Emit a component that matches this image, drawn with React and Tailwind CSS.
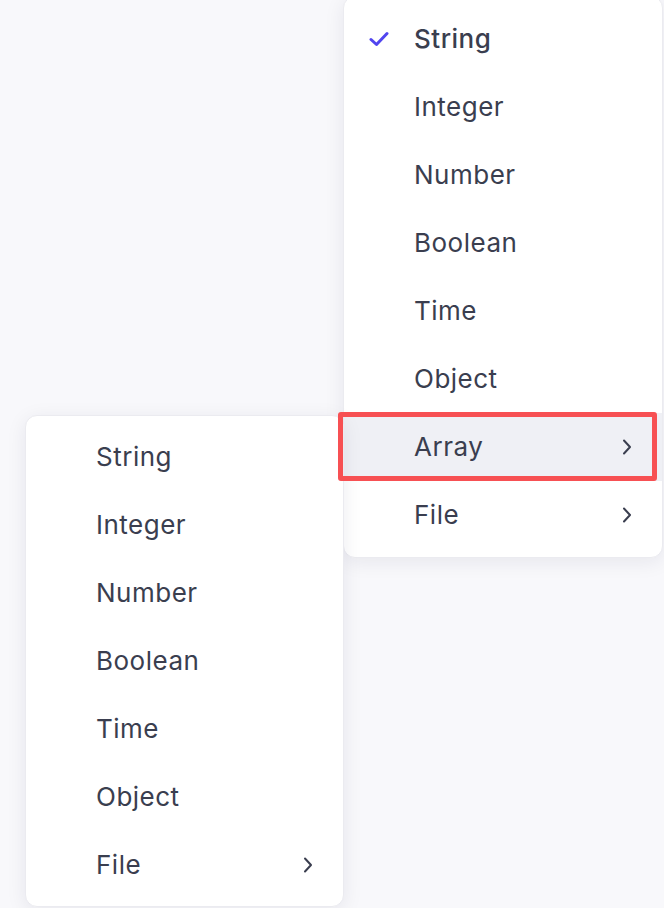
import React from "react";

const Chevron = () => (
  <svg width="10" height="16" viewBox="0 0 10 16" fill="none">
    <path d="M2 1.5 L8 8 L2 14.5" stroke="#3a3e4f" strokeWidth="2" strokeLinecap="round" strokeLinejoin="round" />
  </svg>
);

const Check = () => (
  <svg width="20" height="16" viewBox="0 0 20 16" fill="none">
    <path d="M2 8.5 L7.5 13.5 L18 2.5" stroke="#5145ef" strokeWidth="3" strokeLinecap="round" strokeLinejoin="round" />
  </svg>
);

function Item({ label, selected, sub, active }) {
  return (
    <div className={`flex h-[68px] items-center pr-[30px] ${active ? "bg-[#eff0f5]" : ""}`}>
      <div className="flex w-[70px] shrink-0 items-center justify-end pr-[25px]">{selected ? <Check /> : null}</div>
      <span className={`flex-1 text-[26px] leading-none tracking-[0.5px] text-[#3a3e4f] ${selected ? "font-medium" : "font-normal"}`}>
        {label}
      </span>
      {sub ? <Chevron /> : null}
    </div>
  );
}

export default function App() {
  const right = [
    { label: "String", selected: true },
    { label: "Integer" },
    { label: "Number" },
    { label: "Boolean" },
    { label: "Time" },
    { label: "Object" },
    { label: "Array", sub: true, active: true },
    { label: "File", sub: true },
  ];
  const left = [
    { label: "String" },
    { label: "Integer" },
    { label: "Number" },
    { label: "Boolean" },
    { label: "Time" },
    { label: "Object" },
    { label: "File", sub: true },
  ];
  return (
    <div
      className="relative h-[908px] w-[664px] overflow-hidden bg-[#f8f8fb]"
      style={{ fontFamily: "Inter, 'Noto Sans', sans-serif" }}
    >
      <div className="absolute left-[343px] top-[-4px] w-[320px] rounded-[12px] border border-[#ebebf0] bg-white py-[8px] shadow-[0_4px_20px_rgba(30,30,60,0.08)]">
        {right.map((it) => (
          <Item key={it.label} {...it} />
        ))}
      </div>
      <div className="absolute left-[25px] top-[415px] w-[319px] rounded-[12px] border border-[#ebebf0] bg-white py-[7px] shadow-[0_4px_20px_rgba(30,30,60,0.08)]">
        {left.map((it) => (
          <Item key={it.label} {...it} />
        ))}
      </div>
      <div className="pointer-events-none absolute left-[338px] top-[412px] h-[69px] w-[319px] rounded-[3px] border-[5px] border-[#f75053]" />
    </div>
  );
}
